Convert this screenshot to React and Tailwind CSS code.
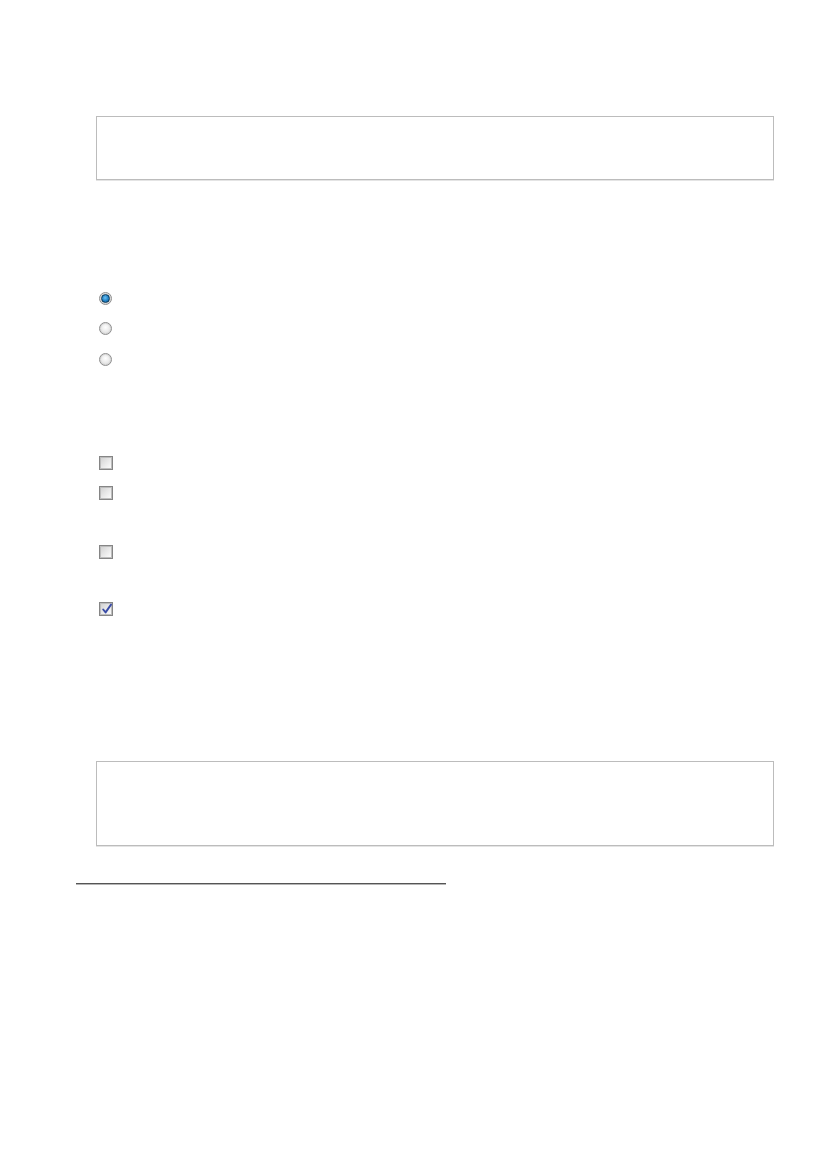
import React from "react";

function Radio({ checked }) {
  return (
    <span className="relative inline-flex h-[13px] w-[13px] items-center justify-center rounded-full border border-[#8e8e8e] bg-[radial-gradient(circle_at_50%_40%,#ffffff_0%,#e8e8e8_55%,#c9c9c9_100%)] shadow-[inset_0_0_0_1px_#d8d8d8]">
      {checked && (
        <span className="h-[9px] w-[9px] rounded-full border border-[#0b3756] bg-[radial-gradient(circle_at_45%_40%,#6cc0f2_0%,#1f80c4_55%,#12558a_100%)]" />
      )}
    </span>
  );
}

function Checkbox({ checked }) {
  return (
    <span className="relative inline-flex h-[14px] w-[14px] items-center justify-center border border-[#858585] bg-[linear-gradient(135deg,#cfcfcf_0%,#e6e6e6_45%,#ffffff_100%)] shadow-[inset_0_0_0_1px_#bdbdbd]">
      {checked && (
        <svg width="12" height="12" viewBox="0 0 12 12" className="absolute left-[1px] top-[0px]">
          <path d="M2.2 6.5 L4.6 9.4 L10 1.6" fill="none" stroke="#3a4ca6" strokeWidth="1.9" strokeLinecap="round" strokeLinejoin="round" />
        </svg>
      )}
    </span>
  );
}

export default function App() {
  const radios = [true, false, false];
  return (
    <div className="h-[1169px] w-[827px] bg-white font-['Liberation_Sans',Arial,sans-serif]">
      <div className="flex flex-col pt-[116px]">
        <div className="ml-[96px] h-[64px] w-[678px] border border-[#bcbcbc] shadow-[0_1px_0_#e4e4e4]" />

        <div className="mt-[103px] ml-[99px] flex flex-col">
          {radios.map((c, i) => (
            <div key={i} className="flex h-[30.5px] items-center">
              <Radio checked={c} />
            </div>
          ))}
        </div>

        <div className="mt-[73px] ml-[99px] flex flex-col">
          <div className="flex h-[30px] items-center">
            <Checkbox />
          </div>
          <div className="flex h-[59px] items-start pt-[8px]">
            <Checkbox />
          </div>
          <div className="flex h-[59px] items-start pt-[8px]">
            <Checkbox />
          </div>
          <div className="flex h-[30px] items-start pt-[6px]">
            <Checkbox checked />
          </div>
        </div>

        <div className="mt-[135px] ml-[96px] h-[85px] w-[678px] border border-[#bcbcbc] shadow-[0_1px_0_#e4e4e4]" />

        <div className="mt-[37px] ml-[76px] h-[2px] w-[370px] border-t border-[#555555] bg-[#b5b5b5]" />
      </div>
    </div>
  );
}
